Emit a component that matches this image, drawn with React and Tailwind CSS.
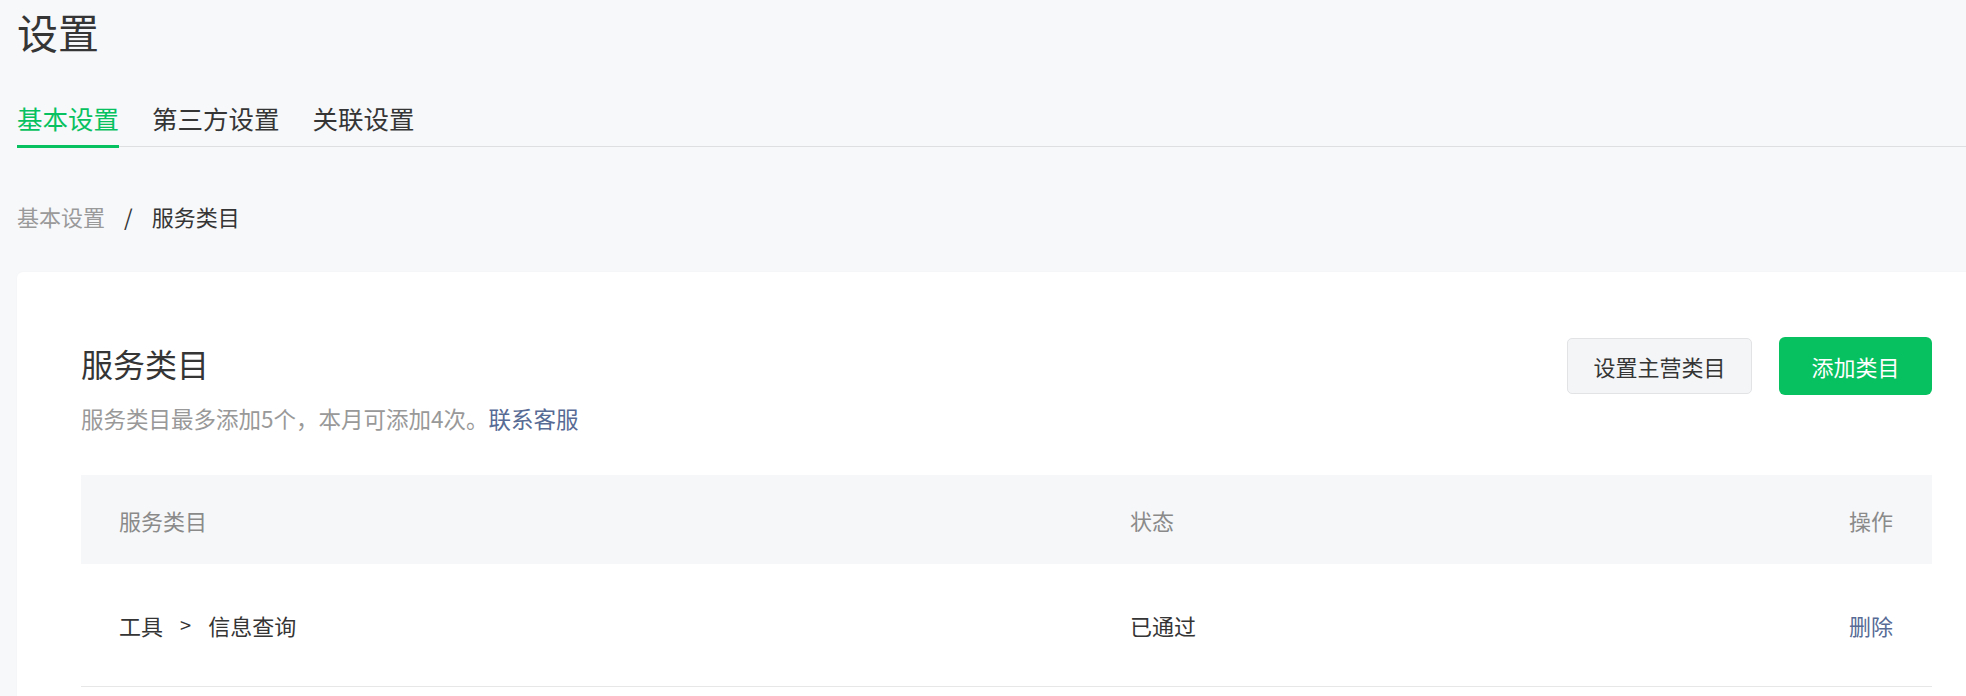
import React from 'react'

const tabs = ['基本设置', '第三方设置', '关联设置']

export default function App() {
  return (
    <div className="relative h-[696px] w-full overflow-hidden bg-[#f7f8fa] font-['Noto_Sans_CJK_SC','Noto_Sans',sans-serif] text-[#353535]">
      <div className="pl-[17px]">
        {/* Page title */}
        <h1 className="pt-[11px] text-[41px] leading-none">设置</h1>

        {/* Tabs */}
        <div className="mt-[53px] flex gap-[33px] border-b border-[#dedfe1]">
          {tabs.map((t, i) => (
            <div
              key={t}
              className={`-mb-[2px] border-b-[3px] pb-[14px] text-[25.5px] leading-none ${i === 0 ? 'border-[#07c160] text-[#07c160]' : 'border-transparent text-[#353535]'}`}
            >
              {t}
            </div>
          ))}
        </div>

        {/* Breadcrumb */}
        <div className="mt-[58px] flex items-center text-[22px] leading-none">
          <span className="text-[#9a9a9a]">基本设置</span>
          <span className="mx-[19px] text-[#353535]">/</span>
          <span className="text-[#353535]">服务类目</span>
        </div>

        {/* Card */}
        <section className="mt-[45px] h-[600px] w-[1979px] rounded-[6px] bg-white px-[64px] pt-[65px] shadow-[0_0_2px_rgba(0,0,0,0.03)]">
          <div className="flex items-start justify-between">
            <div className="pt-[10px]">
              <h2 className="text-[32px] leading-none text-[#353535]">服务类目</h2>
              <p className="mt-[28px] text-[22.5px] leading-none text-[#999]">
                服务类目最多添加5个，本月可添加4次。<span className="text-[#576b95]">联系客服</span>
              </p>
            </div>
            <div className="flex items-center gap-[27px]">
              <button className="flex h-[56px] w-[185px] items-center justify-center rounded-[5px] border border-[#e2e3e5] bg-[#f4f5f7] text-[22px] leading-none text-[#353535]">
                设置主营类目
              </button>
              <button className="flex h-[58px] w-[153px] items-center justify-center rounded-[6px] bg-[#07c160] text-[22px] leading-none text-white">
                添加类目
              </button>
            </div>
          </div>

          {/* Table */}
          <div className="mt-[46px]">
            <div className="grid h-[89px] grid-cols-[1011px_1fr_auto] items-center bg-[#f6f7f9] pl-[38px] pr-[39px] text-[22px] leading-none text-[#8a8a8a]">
              <span>服务类目</span>
              <span>状态</span>
              <span className="text-right">操作</span>
            </div>
            <div className="grid h-[123px] grid-cols-[1011px_1fr_auto] items-center border-b border-[#e7e7e7] pl-[38px] pr-[39px] text-[22px] leading-none text-[#353535]">
              <span className="flex items-center">
                工具<span className="mx-[17px] text-[20px]">&gt;</span>信息查询
              </span>
              <span>已通过</span>
              <span className="text-right text-[#576b95]">删除</span>
            </div>
          </div>
        </section>
      </div>
    </div>
  )
}
